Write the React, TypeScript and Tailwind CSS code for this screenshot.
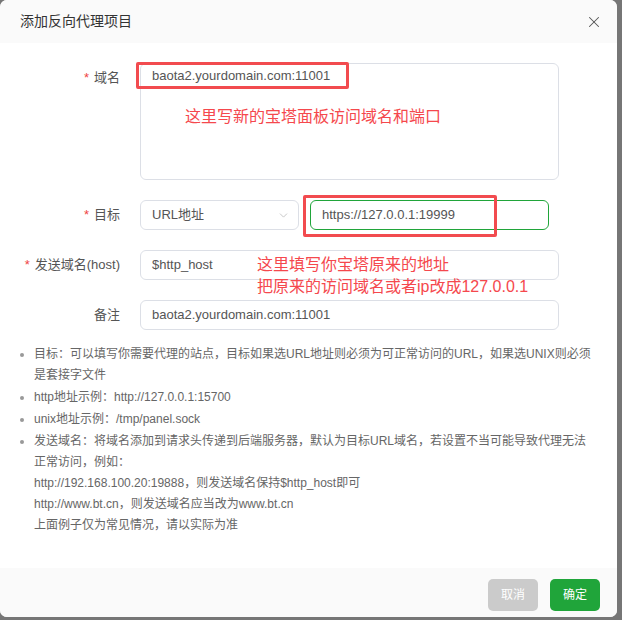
import { X, ChevronDown } from "lucide-react";

const font = { fontFamily: '"Liberation Sans", "Noto Sans CJK SC", sans-serif' };

function Label({ text, required }: { text: string; required?: boolean }) {
  return (
    <div className="w-[120px] shrink-0 text-right text-[13px] leading-[30px] text-[#555]">
      {required && <span className="text-[#ef4444] mr-[5px]">*</span>}
      {text}
    </div>
  );
}

const tips = [
  "目标：可以填写你需要代理的站点，目标如果选URL地址则必须为可正常访问的URL，如果选UNIX则必须是套接字文件",
  "http地址示例：http://127.0.0.1:15700",
  "unix地址示例：/tmp/panel.sock",
];

export default function App() {
  return (
    <div className="w-[622px] h-[620px] bg-[#767676]" style={font}>
      <div className="relative w-[617px] h-[617px] bg-white rounded-[7px] overflow-hidden flex flex-col">
        {/* Header */}
        <div className="h-[43px] bg-[#fafafa] flex items-center justify-between pl-[20px] pr-[14px]">
          <span className="text-[14px] text-[#333]">添加反向代理项目</span>
          <X size={18} strokeWidth={1.4} className="text-[#555]" />
        </div>

        {/* Body */}
        <div className="flex-1 pt-[20px]">
          <div className="flex flex-col gap-[20px]">
            <div className="flex">
              <Label text="域名" required />
              <div className="ml-[20px] w-[419px] h-[117px] border border-[#dcdfe6] rounded-[6px] px-[11px] pt-[4px] text-[13px] leading-[16px] text-[#555]">
                baota2.yourdomain.com:11001
              </div>
            </div>
            <div className="flex">
              <Label text="目标" required />
              <div className="ml-[20px] w-[159px] h-[30px] border border-[#dcdfe6] rounded-[6px] pl-[11px] pr-[8px] flex items-center justify-between text-[13px] text-[#555]">
                <span>URL地址</span>
                <ChevronDown size={13} strokeWidth={1.2} className="text-[#aaa]" />
              </div>
              <div className="ml-[11px] w-[239px] h-[30px] border border-[#20a53a] rounded-[6px] pl-[11px] flex items-center text-[13px] text-[#555]">
                https://127.0.0.1:19999
              </div>
            </div>
            <div className="flex">
              <Label text="发送域名(host)" required />
              <div className="ml-[20px] w-[419px] h-[30px] border border-[#dcdfe6] rounded-[6px] pl-[11px] flex items-center text-[13px] text-[#555]">
                $http_host
              </div>
            </div>
            <div className="flex">
              <Label text="备注" />
              <div className="ml-[20px] w-[419px] h-[30px] border border-[#dcdfe6] rounded-[6px] pl-[11px] flex items-center text-[13px] text-[#555]">
                baota2.yourdomain.com:11001
              </div>
            </div>
          </div>

          {/* Tips */}
          <ul className="mt-[14px] pl-[34px] pr-[24px] list-disc marker:text-[#999] text-[12px] leading-[21px] text-[#666]">
            {tips.map((t) => (
              <li key={t} className="mb-[1px]">{t}</li>
            ))}
            <li>
              发送域名：将域名添加到请求头传递到后端服务器，默认为目标URL域名，若设置不当可能导致代理无法正常访问，例如：
              <br />
              http://192.168.100.20:19888，则发送域名保持$http_host即可
              <br />
              http://www.bt.cn，则发送域名应当改为www.bt.cn
              <br />
              上面例子仅为常见情况，请以实际为准
            </li>
          </ul>
        </div>

        {/* Footer */}
        <div className="h-[49px] bg-[#fafafa] flex justify-end gap-[12px] pt-[11px] pr-[17px]">
          <button className="w-[50px] h-[32px] rounded-[5px] bg-[#cbcbcb] text-white text-[12px]">取消</button>
          <button className="w-[50px] h-[32px] rounded-[5px] bg-[#20a53a] text-white text-[12px]">确定</button>
        </div>

        {/* Annotations */}
        <div className="absolute left-[136px] top-[62px] w-[213px] h-[27px] border-[3px] border-[#f24b4f] rounded-[2px]" />
        <div className="absolute left-[303px] top-[195px] w-[194px] h-[42px] border-[3px] border-[#f24b4f] rounded-[2px]" />
        <div className="absolute left-[185px] top-[106px] text-[16px] leading-[22px] text-[#f5484d]">
          这里写新的宝塔面板访问域名和端口
        </div>
        <div className="absolute left-[257px] top-[254px] text-[16px] leading-[22px] text-[#f5484d]">
          这里填写你宝塔原来的地址
          <br />
          把原来的访问域名或者ip改成127.0.0.1
        </div>
      </div>
    </div>
  );
}
